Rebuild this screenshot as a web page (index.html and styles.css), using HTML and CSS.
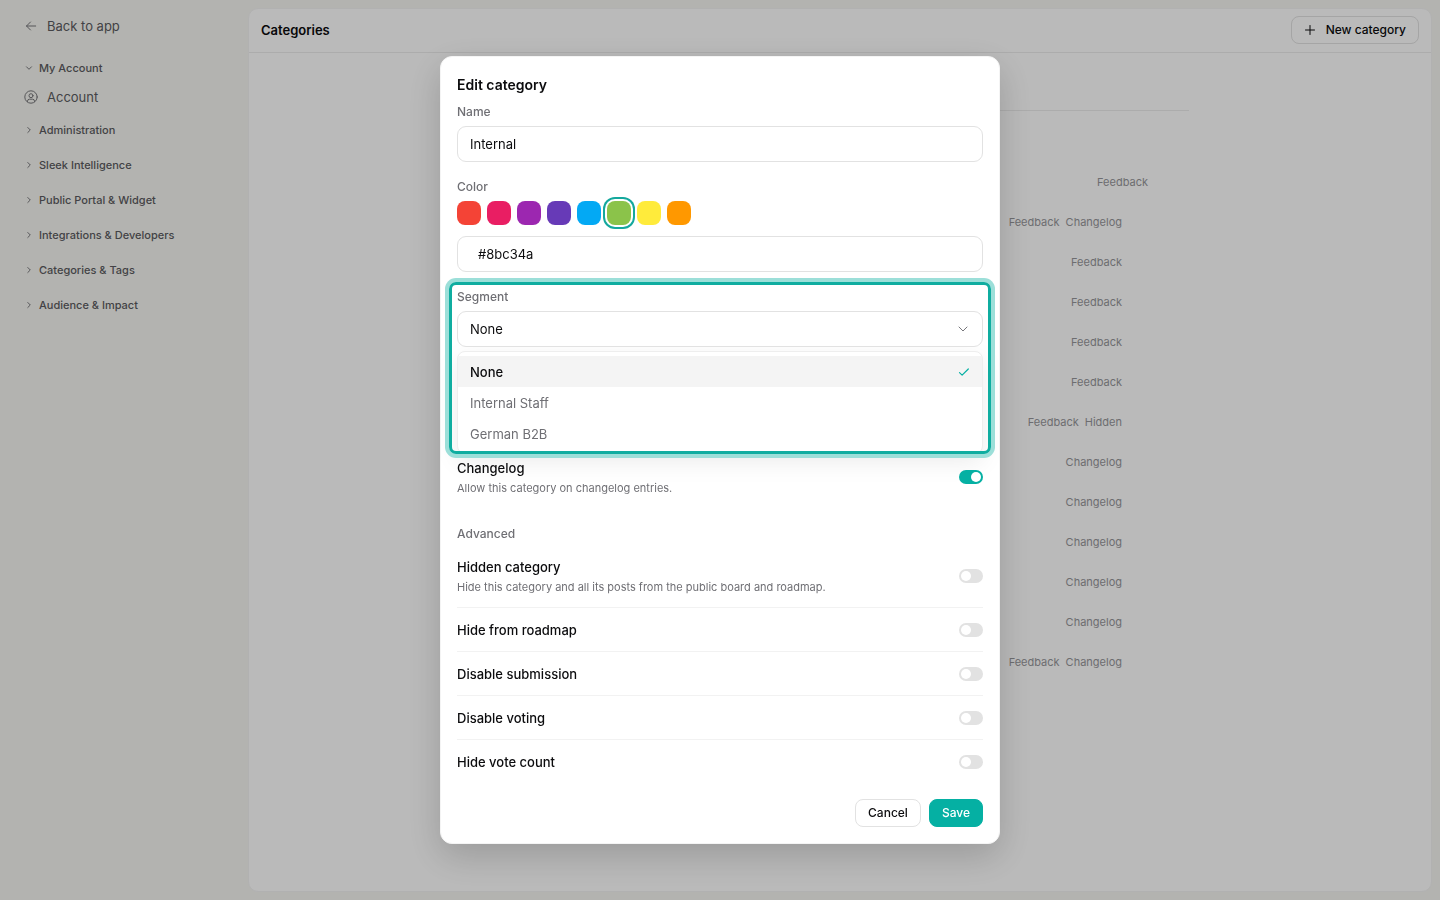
FILE: index.html
```html
<!DOCTYPE html>
<html lang="en">
<head>
<meta charset="utf-8">
<title>Categories</title>
<link rel="stylesheet" href="styles.css">
</head>
<body>
<div class="app">
  <nav class="sidebar">
    <a class="nav-link back" href="#"><svg class="icon-md" viewBox="0 0 16 16"><path d="M12.700 8H3.500M7.500 4 3.500 8l4 4"/></svg>Back to app</a>
    <button class="group open" type="button"><svg class="icon-xs" viewBox="0 0 8 8"><path d="m1.500 2.800 2.500 2.500 2.500-2.500"/></svg>My Account</button>
    <a class="nav-link account" href="#"><svg class="icon-md" viewBox="0 0 16 16"><circle cx="8" cy="8" r="6.200"/><circle cx="8" cy="6.700" r="2"/><path d="M4.500 12.700v-.5a2 2 0 0 1 2-2h3a2 2 0 0 1 2 2v.5"/></svg>Account</a>
    <button class="group" type="button"><svg class="icon-xs" viewBox="0 0 8 8"><path d="m2.800 1.500 2.500 2.500-2.500 2.500"/></svg>Administration</button>
    <button class="group" type="button"><svg class="icon-xs" viewBox="0 0 8 8"><path d="m2.800 1.500 2.500 2.500-2.500 2.500"/></svg>Sleek Intelligence</button>
    <button class="group" type="button"><svg class="icon-xs" viewBox="0 0 8 8"><path d="m2.800 1.500 2.500 2.500-2.500 2.500"/></svg>Public Portal &amp; Widget</button>
    <button class="group" type="button"><svg class="icon-xs" viewBox="0 0 8 8"><path d="m2.800 1.500 2.500 2.500-2.500 2.500"/></svg>Integrations &amp; Developers</button>
    <button class="group" type="button"><svg class="icon-xs" viewBox="0 0 8 8"><path d="m2.800 1.500 2.500 2.500-2.500 2.500"/></svg>Categories &amp; Tags</button>
    <button class="group" type="button"><svg class="icon-xs" viewBox="0 0 8 8"><path d="m2.800 1.500 2.500 2.500-2.500 2.500"/></svg>Audience &amp; Impact</button>
  </nav>
  <main class="panel">
    <header class="panel-head">
      <h1>Categories</h1>
      <button class="btn new" type="button"><svg class="icon-plus" viewBox="0 0 12 12"><path d="M6 1.500v9M1.500 6h9"/></svg>New category</button>
    </header>
    <div class="content">
      <ul class="rows">
        <li class="default"><span>Feedback</span></li>
        <li><span>Feedback</span><span>Changelog</span></li>
        <li><span>Feedback</span></li>
        <li><span>Feedback</span></li>
        <li><span>Feedback</span></li>
        <li><span>Feedback</span></li>
        <li><span>Feedback</span><span>Hidden</span></li>
        <li><span>Changelog</span></li>
        <li><span>Changelog</span></li>
        <li><span>Changelog</span></li>
        <li><span>Changelog</span></li>
        <li><span>Changelog</span></li>
        <li><span>Feedback</span><span>Changelog</span></li>
      </ul>
    </div>
  </main>
</div>

<div class="overlay">
  <form class="dialog" role="dialog" aria-labelledby="dialog-title">
    <h2 id="dialog-title">Edit category</h2>
    <div class="field">
      <label class="label" for="name">Name</label>
      <input class="control" id="name" type="text" value="Internal">
    </div>
    <div class="field">
      <label class="label" for="hex">Color</label>
      <div class="swatches">
        <button class="swatch red" type="button" aria-label="Red"></button>
        <button class="swatch pink" type="button" aria-label="Pink"></button>
        <button class="swatch purple" type="button" aria-label="Purple"></button>
        <button class="swatch violet" type="button" aria-label="Violet"></button>
        <button class="swatch blue" type="button" aria-label="Blue"></button>
        <button class="swatch green selected" type="button" aria-label="Green"></button>
        <button class="swatch yellow" type="button" aria-label="Yellow"></button>
        <button class="swatch orange" type="button" aria-label="Orange"></button>
      </div>
      <input class="control hex" id="hex" type="text" value="#8bc34a">
    </div>
    <div class="field segment">
      <label class="label" for="segment">Segment</label>
      <div class="select-wrap">
        <select class="control" id="segment"><option>None</option></select>
        <svg class="chevron" viewBox="0 0 12 12"><path d="m2 4 4 4 4-4"/></svg>
      </div>
      <ul class="menu" role="listbox" aria-label="Segment">
        <li class="active" role="option" aria-selected="true">None<svg class="check" viewBox="0 0 12 12"><path d="m1.500 6.600 2.600 2.500L10.300 3"/></svg></li>
        <li role="option">Internal Staff</li>
        <li role="option">German B2B</li>
      </ul>
    </div>
    <div class="row first">
      <label for="changelog">Changelog<small>Allow this category on changelog entries.</small></label>
      <input class="switch" id="changelog" type="checkbox" role="switch" checked>
    </div>
    <h3 class="label advanced">Advanced</h3>
    <div class="options">
      <div class="row described">
        <label for="hidden">Hidden category<small>Hide this category and all its posts from the public board and roadmap.</small></label>
        <input class="switch" id="hidden" type="checkbox" role="switch">
      </div>
      <div class="row">
        <label for="roadmap">Hide from roadmap</label>
        <input class="switch" id="roadmap" type="checkbox" role="switch">
      </div>
      <div class="row">
        <label for="submission">Disable submission</label>
        <input class="switch" id="submission" type="checkbox" role="switch">
      </div>
      <div class="row">
        <label for="voting">Disable voting</label>
        <input class="switch" id="voting" type="checkbox" role="switch">
      </div>
      <div class="row">
        <label for="count">Hide vote count</label>
        <input class="switch" id="count" type="checkbox" role="switch">
      </div>
    </div>
    <footer class="actions">
      <button class="btn" type="button">Cancel</button>
      <button class="btn primary" type="submit">Save</button>
    </footer>
  </form>
</div>
</body>
</html>
```
FILE: styles.css
```css
* { box-sizing: border-box; }
body {
  margin: 0;
  font-family: Inter, "Liberation Sans", sans-serif;
  font-size: 13px;
  line-height: 20px;
  color: #0c0c0e;
}
h1, h2, h3, ul { margin: 0; padding: 0; }
ul { list-style: none; }
button, input, select { font: inherit; color: inherit; margin: 0; }
svg { fill: none; stroke: currentColor; stroke-linecap: round; stroke-linejoin: round; flex: none; }

.app {
  display: flex;
  min-height: 100vh;
  background: #f6f6f1;
}
.sidebar {
  width: 248px;
  padding: 16px 23px;
  display: flex;
  flex-direction: column;
  align-items: flex-start;
  color: #5b5b60;
}
.sidebar svg { color: #77777b; }
.nav-link {
  display: flex;
  align-items: center;
  gap: 8px;
  color: inherit;
  text-decoration: none;
}
.icon-md { width: 16px; height: 16px; stroke-width: 1; }
.icon-xs { width: 8px; height: 8px; stroke-width: 1; }
.group {
  display: flex;
  align-items: center;
  gap: 6px;
  height: 35px;
  padding: 0 2px;
  border: 0;
  background: none;
  font-size: 11px;
  font-weight: 500;
}
.group.open { height: 20px; margin-top: 22px; }
.account { margin: 9px 0 5px; }

.panel {
  flex: 1;
  margin: 8px 8px 8px 0;
  border: 1px solid #f3f3f3;
  border-radius: 10px;
  background: #fff;
}
.panel-head {
  display: flex;
  align-items: center;
  justify-content: space-between;
  height: 44px;
  padding: 0 12px 1px;
  border-bottom: 1px solid #ececec;
}
h1 { font-size: 13px; font-weight: 600; }
.btn {
  height: 28px;
  padding: 0 12px;
  display: flex;
  align-items: center;
  gap: 10px;
  border: 1px solid #e2e2e2;
  border-radius: 8px;
  background: #fff;
  font-size: 12px;
  font-weight: 500;
}
.icon-plus { width: 12px; height: 12px; stroke-width: 1; }
.content { max-width: 698px; margin: 57px auto 0; border-top: 1px solid #ececec; }
.rows { padding-top: 51px; }
.rows li {
  display: flex;
  align-items: center;
  justify-content: flex-end;
  gap: 6px;
  height: 40px;
  padding-right: 67px;
  font-size: 11px;
  color: #96969a;
}
.rows .default { padding-right: 41px; }

.overlay {
  position: fixed;
  inset: 0;
  display: flex;
  align-items: center;
  justify-content: center;
  background: rgba(0, 0, 0, 0.27);
}
.dialog {
  width: 560px;
  padding: 16px;
  border: 1px solid #f4f4f4;
  border-radius: 12px;
  background: #fff;
  box-shadow: 0 12px 36px rgba(0, 0, 0, 0.18);
}
h2 { font-size: 14px; line-height: 24px; font-weight: 600; margin-bottom: 6px; }
.field { margin-bottom: 16px; }
.label {
  display: block;
  margin-bottom: 5px;
  font-size: 12px;
  line-height: 18px;
  font-weight: 500;
  color: #6f6f74;
}
.control {
  display: block;
  width: 100%;
  height: 36px;
  padding: 0 12px;
  border: 1px solid #e2e2e2;
  border-radius: 9px;
  background: #fff;
  outline: 0;
  appearance: none;
}
.hex { padding-left: 20px; }
.swatches { display: flex; gap: 6px; margin-bottom: 11px; }
.swatch { width: 24px; height: 24px; padding: 0; border: 0; border-radius: 8px; }
.selected { box-shadow: 0 0 0 2px #fff, 0 0 0 4px #14a89d; }
.red { background: #f44336; }
.pink { background: #e91e63; }
.purple { background: #9c27b0; }
.violet { background: #673ab7; }
.blue { background: #03a9f4; }
.green { background: #8bc34a; }
.yellow { background: #ffeb3b; }
.orange { background: #ff9800; }

.segment { position: relative; margin-bottom: 0; }
/* Focus ring drawn around the whole segment group */
.segment::after {
  content: "";
  position: absolute;
  inset: -6px -8px 0;
  border: 3px solid #0fada0;
  border-radius: 7px;
  box-shadow: 0 0 0 4px #9cdfd9;
  pointer-events: none;
}
.select-wrap { position: relative; }
.select-wrap .chevron {
  position: absolute;
  right: 14px;
  top: 12px;
  width: 12px;
  height: 12px;
  color: #77777c;
  pointer-events: none;
}
.menu {
  margin-top: 4px;
  padding: 4px 0;
  border: 1px solid #eee;
  border-radius: 8px;
  background: #fff;
  box-shadow: 0 8px 24px rgba(0, 0, 0, 0.08);
}
.menu li {
  display: flex;
  align-items: center;
  justify-content: space-between;
  height: 31px;
  padding: 0 12px;
  color: #6f6f74;
}
.menu .active { background: #f4f4f4; color: #0c0c0e; font-weight: 500; }
.check { width: 12px; height: 12px; color: #05b0a3; stroke-width: 1.2; }

.row {
  display: flex;
  align-items: center;
  justify-content: space-between;
  padding: 12px 0 11px;
  border-bottom: 1px solid #f2f2f2;
  font-weight: 500;
}
.row:last-child { border-bottom: 0; }
.row.described { padding-bottom: 12px; }
.row.first { position: relative; padding: 4px 0 12px; border-bottom: 0; }
.row small {
  display: block;
  margin-top: 2px;
  font-size: 11px;
  line-height: 16px;
  font-weight: 400;
  color: #6f6f74;
}
.advanced { margin: 17px 0 2px; }
.switch {
  appearance: none;
  width: 24px;
  height: 14px;
  padding: 2px;
  border-radius: 7px;
  background: #e2e2e2;
  display: flex;
}
.switch::before { content: ""; width: 10px; height: 10px; border-radius: 50%; background: #fff; }
.switch:checked { background: #05b0a3; justify-content: flex-end; }
.actions { display: flex; justify-content: flex-end; gap: 8px; margin-top: 16px; }
.primary { border-color: #05b0a3; background: #05b0a3; color: #fff; }
```
